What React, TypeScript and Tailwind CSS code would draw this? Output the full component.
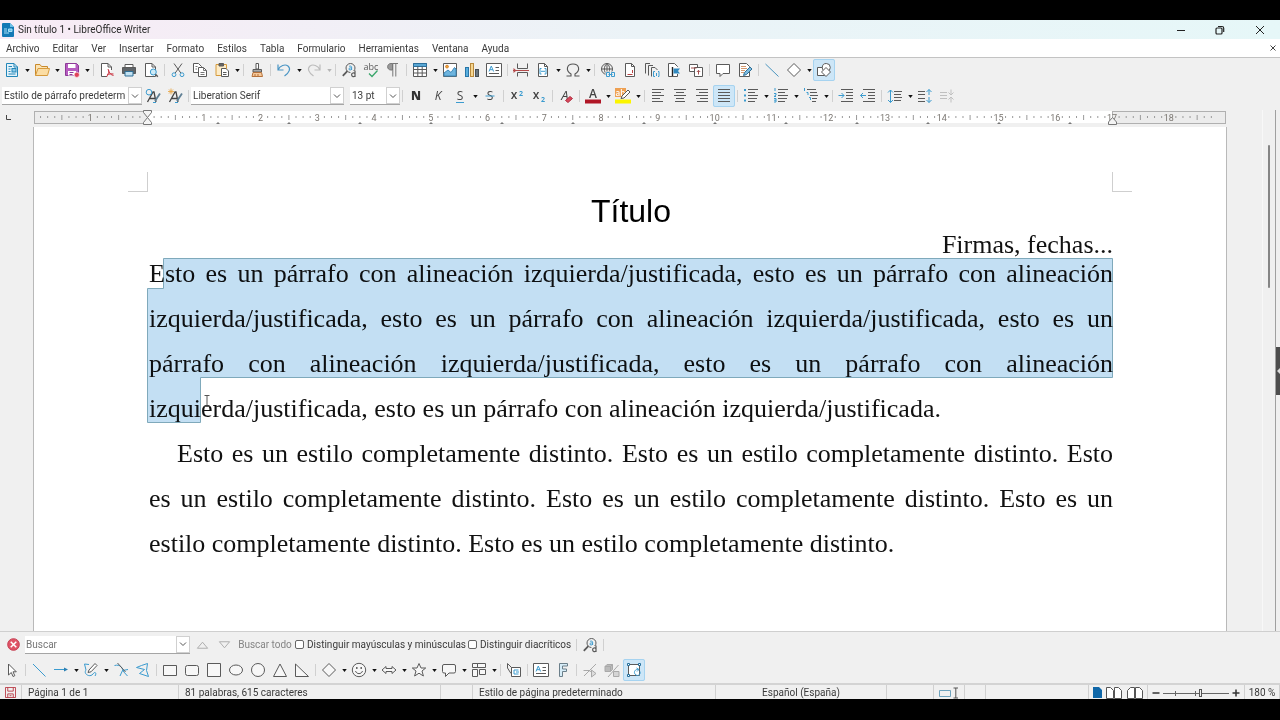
import React, { useState } from 'react';

interface Tool {
  label: string;
  icon: React.ReactNode;
  menu?: boolean;
  active?: boolean;
}

const G = '#5a5a5a';
const B = '#3b9bcf';
const L = '#a9a9a9';

const Icon = ({ children }: { children: React.ReactNode }) => (
  <svg viewBox="0 0 16 16" className="w-4 h-4 shrink-0 overflow-visible" fill="none" stroke={G} strokeWidth="1" aria-hidden="true">
    {children}
  </svg>
);

const lines = (rows: number[][], stroke = G) =>
  rows.map(([x1, x2, y], i) => <path key={i} d={`M${x1} ${y}H${x2}`} stroke={stroke} />);

const pageShape = 'M3.5 1.5H9.5L12.5 4.5V14.5H3.5Z';

const searchGlyph = (
  <>
    <circle cx="9.5" cy="6" r="4.5" />
    <path d="M6.3 9.2L1.8 13.8" strokeWidth="1.8" />
    <path d="M8 4.6C8.5 3.8 10.6 3.8 10.6 5.2V8M10.6 6C9.5 5.7 7.9 5.9 7.9 7C7.9 8.2 9.9 8.3 10.6 7.2" stroke={B} />
    <rect x="9.5" y="9" width="6" height="7" fill="#f0f0f0" stroke="none" />
    <path d="M14 8.5V15M14 11.6C13 10.3 10.6 10.8 10.6 12.8C10.6 14.8 13 15.2 14 13.9" strokeWidth="1.2" />
  </>
);

const standardTools: (Tool | null)[] = [
  {
    label: 'Nuevo', menu: true, icon: <>
      <path d="M2.5 1.5H10L13.5 5V14.5H2.5Z" fill="#e4f3fb" stroke="#2387b8" />
      <path d="M10 1.5V5H13.5M4.5 4.5H8M4.5 7H6.5M4.5 9.5H6.5M4.5 12H11.5" stroke="#2387b8" />
      <rect x="8" y="6.5" width="4" height="3.5" fill="#8fcbe8" stroke="#2387b8" />
    </>
  },
  {
    label: 'Abrir', menu: true, icon: <>
      <path d="M1.5 13.5V2.5H6L7.5 4.5H13.5V6" fill="#fbe3b3" stroke="#c98a2b" />
      <path d="M1.5 13.5L4 6.5H15.5L13.5 13.5Z" fill="#fbdda4" stroke="#d69a3b" />
    </>
  },
  {
    label: 'Guardar', menu: true, icon: <>
      <path d="M1.5 1.5H12.5L14.5 3.5V13.5H1.5Z" fill="#b65cc0" stroke="#8c3a97" />
      <path d="M4 2H11.5V6H4Z" fill="#fff" stroke="none" />
      <path d="M4 9H12V13.5H4Z" fill="#fff" stroke="none" />
      <path d="M5.5 10.5H9.5M5.5 12.5H8.5" stroke="#8c3a97" />
      <circle cx="12.8" cy="12.8" r="2.6" fill="#e0435a" stroke="#fff" strokeWidth=".6" />
    </>
  },
  null,
  {
    label: 'Exportar a PDF', icon: <>
      <path d="M8 14.5H2.5V1.5H9L12.5 5V8" fill="#fff" />
      <path d="M9 1.5V5H12.5" />
      <path d="M9 7C11 10 8 14 7.5 15M9.5 8C10 11 12 13 14.5 13.5M8 13C10 11.5 13 11.8 14.5 12" stroke="#c9303e" />
    </>
  },
  {
    label: 'Imprimir', icon: <>
      <path d="M4 5.5V2.5H12V5.5" fill="#fff" />
      <path d="M1.5 5.5H14.5V11.5H1.5Z" fill="#5f6468" />
      <path d="M4 9.5H12V14H4Z" fill="#c2e2f3" stroke="#2f6f96" />
    </>
  },
  {
    label: 'Previsualizar impresión', icon: <>
      <path d="M7 14.5H2.5V1.5H9L12.5 5V14.5Z" fill="#fff" />
      <path d="M9 1.5V5H12.5" />
      <circle cx="10.3" cy="10" r="3" fill="#cdeaf7" stroke={B} />
      <path d="M12.5 12.3L14.8 14.8" stroke={G} strokeWidth="1.4" />
    </>
  },
  null,
  {
    label: 'Cortar', icon: <>
      <path d="M4 1.5L10.8 11M12 1.5L5.2 11" />
      <circle cx="4" cy="12.7" r="1.9" stroke={B} />
      <circle cx="12" cy="12.7" r="1.9" stroke={B} />
    </>
  },
  {
    label: 'Copiar', icon: <>
      <path d="M1.5 1.5H6.5L9.5 4.5V10.5H1.5Z" fill="#fff" />
      <path d="M6.5 5.5H11.5L14.5 8.5V14.5H6.5Z" fill="#fff" />
      <path d="M11.5 5.5V8.5H14.5M8.5 10.5H12.5M8.5 12.5H12.5M3.5 4.5H5.5M3.5 7H5" stroke="#777" />
    </>
  },
  {
    label: 'Pegar', menu: true, icon: <>
      <path d="M2 2.5H12.5V13.5H2Z" fill="#fdecc8" stroke="#d69a3b" />
      <path d="M5 1.5H9.5V4H5Z" fill="#666" />
      <path d="M7.5 6.5H12L14.5 9V14.5H7.5Z" fill="#fff" />
      <path d="M9 10.5H12.5M9 12.5H12.5" />
    </>
  },
  null,
  {
    label: 'Clonar formato', icon: <>
      <path d="M7 1.5H9.5V7H7Z" fill="#fff" />
      <path d="M4 7.5H12.5V10H4Z" fill="#aaa" />
      <path d="M4 10.5H12.5L13.5 14.5H3Z" fill="#f7c99a" stroke="#b5713a" />
      <path d="M6 12V14M9 12V14" stroke="#b5713a" />
    </>
  },
  null,
  { label: 'Deshacer', menu: true, icon: <path d="M2 2.5V8H7.5M2 8C4 3.5 9 1.8 12 4C15 6.5 13.5 10.5 8.5 14" stroke="#4a95c4" strokeWidth="1.2" /> },
  { label: 'Rehacer', menu: true, icon: <path d="M14 2.5V8H8.5M14 8C12 3.5 7 1.8 4 4C1 6.5 2.5 10.5 7.5 14" stroke="#bcbcbc" strokeWidth="1.2" /> },
  null,
  { label: 'Buscar y reemplazar', icon: searchGlyph },
  {
    label: 'Ortografía', icon: <>
      <text x="8" y="8" textAnchor="middle" fontSize="9" fontFamily="Open Sans, sans-serif" fill={G} stroke="none">abc</text>
      <path d="M6 11.5L9 14.5L14.5 8.5" stroke="#3aa66b" strokeWidth="1.3" />
    </>
  },
  {
    label: 'Marcas de formato', icon: <>
      <path d="M7.5 1.5H6C1.5 1.5 1.5 8 6 8H7.5Z" fill="#999" stroke="#777" />
      <path d="M7.5 1.5H13M7.8 1.5V14.5M10.8 1.5V14.5" stroke="#777" />
    </>
  },
  null,
  {
    label: 'Insertar tabla', menu: true, icon: <>
      <path d="M1.5 1.5H14.5V14.5H1.5Z" fill="#fff" />
      <path d="M1.5 1.5H14.5V4.5H1.5Z" fill="#58a6d3" stroke="#2b6f9c" />
      <path d="M1.5 7.5H14.5M1.5 11H14.5M5.8 4.5V14.5M10.2 4.5V14.5" />
    </>
  },
  {
    label: 'Insertar imagen', icon: <>
      <path d="M1.5 1.5H14.5V14.5H1.5Z" fill="#fff" />
      <path d="M2 14V11L6 8L9 10.5L12.5 5.5L14 7V14Z" fill="#6db4de" stroke="#3b88ba" />
      <circle cx="5" cy="4.6" r="1.4" fill="#f1a33c" stroke="#d5852a" />
    </>
  },
  {
    label: 'Insertar gráfico', icon: <>
      <rect x="1.5" y="5.5" width="3" height="9" fill="#58aede" stroke="#2876a8" />
      <rect x="6.5" y="1.500" width="3" height="13" fill="#f6d793" stroke="#b98a3c" />
      <rect x="11.5" y="7.5" width="3" height="7" fill="#6b7780" stroke="#474f55" />
    </>
  },
  {
    label: 'Cuadro de texto', icon: <>
      <path d="M.5 1.5H15.5V14.5H.5Z" fill="#fff" />
      <path d="M3 9.5L5.3 4L7.6 9.5M3.8 7.7H6.8" stroke={B} />
      {lines([[9.5, 13, 5.5], [9.5, 13, 8.5], [3, 13, 11.5]])}
    </>
  },
  null,
  {
    label: 'Salto de página', icon: <>
      <path d="M4.5 1.5V6.5H14.5V1.5M4.5 14.5V10.5H14.5V14.5" />
      <path d="M0 8.5H16" stroke="#b44a4a" />
      <path d="M0.5 6L3.5 8.5L0.5 11Z" fill="#b44a4a" stroke="none" />
    </>
  },
  {
    label: 'Insertar campo', menu: true, icon: <>
      <path d={pageShape} fill="#fff" />
      <path d="M9.5 1.5V4.5H12.5" />
      <path d="M6.5 6.5H5V12H6.5M9.5 6.5H11V12H9.5M6 9.3H10" stroke={B} />
    </>
  },
  { label: 'Carácter especial', menu: true, icon: <path d="M1.5 14H6V12C0 8.5 2 2 8 2S16 8.5 10 12V14H14.5" stroke="#555" strokeWidth="1.1" /> },
  null,
  {
    label: 'Hiperenlace', icon: <>
      <circle cx="7" cy="7" r="5.5" />
      <path d="M1.5 7H12.5M7 1.5V12.5M7 1.5C3.5 4 3.5 10 7 12.5M7 1.5C10.5 4 10.5 10 7 12.5" />
      <rect x="5.5" y="9.5" width="10" height="6" fill="#f0f0f0" stroke="none" />
      <path d="M6.5 10.500H9.500V14.500H6.500ZM11.500 10.500H14.500V14.500H11.500ZM8.500 12.500H12.500" stroke={B} />
    </>
  },
  {
    label: 'Nota al pie', icon: <>
      <path d={pageShape} fill="#fff" />
      <path d="M9.5 1.5V4.5H12.5" />
      <path d="M5.5 12.5H10.500M10.500 8V11" stroke="#b94343" />
    </>
  },
  {
    label: 'Nota final', icon: <>
      <path d="M1.5 11.5V1.5H6M4.5 13.5V3.5H9M7.5 14.5V5.5H11L13.5 8" />
      <path d="M11 9.5H9.5V14.5H11M14 9.5H15V14.5H14M12.5 11V14" stroke={B} />
    </>
  },
  {
    label: 'Marcador', icon: <>
      <path d="M11.5 5V4.5L8.5 1.5H2.5V14.5H11.5V12" fill="#fff" />
      <path d="M6.5 5V14" stroke="#222" strokeWidth="1.4" />
      <path d="M7.5 6.5H14L12 9L14 11.5H7.5Z" fill="#3189bf" stroke="none" />
    </>
  },
  {
    label: 'Referencia cruzada', icon: <>
      <path d="M1.5 2.5H9.5V9.5H1.5Z" fill="#fff" />
      <path d="M6.5 5.5H14.5V14.5H6.5Z" fill="#fff" />
      <path d="M3 6H8.5M10.5 12.5V8.5M8.8 10L10.5 8.3L12.2 10" stroke="#a04c4c" />
    </>
  },
  null,
  { label: 'Comentario', icon: <path d="M1.5 2.5H14.5V11.5H8L5 14.5V11.5H1.5Z" fill="#fff" /> },
  {
    label: 'Control de cambios', icon: <>
      <path d="M2.5 1.5H9.5L12.5 4.5V14.5H2.5Z" fill="#fff" />
      {lines([[4, 9, 4.5], [4, 10, 6.5], [4, 8, 8.5], [4, 7, 10.5]], '#d49a70')}
      <path d="M6.5 13.5L7.5 10.5L13 5L15 7L9.5 12.5Z" fill="#7dbbe0" stroke="#2f6f96" />
    </>
  },
  null,
  { label: 'Línea', icon: <path d="M1.5 2L14.5 14.5" stroke="#4a95bf" /> },
  { label: 'Formas', menu: true, icon: <path d="M8 1.5L14.5 8L8 14.5L1.5 8Z" fill="#fff" /> },
  {
    label: 'Mostrar funciones de dibujo', active: true, icon: <>
      <path d="M1.5 5.5H8.5V13.5H1.5Z" fill="#fff" />
      <circle cx="10.3" cy="5.5" r="4" fill="#fff" />
      <path d="M10 5.5L14.5 10L10 14.5L5.5 10Z" fill="#fff" />
    </>
  },
];

const styleTools: Tool[] = [
  {
    label: 'Actualizar estilo', icon: <>
      <path d="M2.5 14L8 4H9L11 14M4.5 10.5H10" stroke="#444" strokeWidth="1.3" />
      <circle cx="4" cy="4.2" r="2.8" stroke={B} />
      <path d="M10 13L15 5.500" stroke="#5f7f94" strokeWidth="1.8" />
      <path d="M8 14.500H11" stroke={B} />
    </>
  },
  {
    label: 'Estilo nuevo', icon: <>
      <path d="M2.5 14L8 4H9L11 14M4.5 10.5H10" stroke="#444" strokeWidth="1.3" />
      <path d="M4 .5V6.5M1 3.5H7M2 1.5L6 5.5M6 1.5L2 5.5" stroke="#e8a84a" strokeWidth=".9" />
      <path d="M10 13L15 5.500" stroke="#5f7f94" strokeWidth="1.8" />
      <path d="M8 14.500H11" stroke={B} />
    </>
  },
];

const glyph = (t: string, extra: React.SVGProps<SVGTextElement> = {}) => (
  <text x="8" y="12" textAnchor="middle" fontSize="12" fontFamily="Open Sans, sans-serif" fill="#444" stroke="none" {...extra}>{t}</text>
);

const formatTools: (Tool | null)[] = [
  null,
  { label: 'Negrita', icon: glyph('N', { fontWeight: 800, fill: '#333' }) },
  { label: 'Cursiva', icon: glyph('K', { fontStyle: 'italic' }) },
  { label: 'Subrayado', menu: true, icon: <>{glyph('S')}<path d="M4 14.5H12" stroke={B} /></> },
  { label: 'Tachado', icon: <>{glyph('S')}<path d="M3.5 8H12.5" stroke={B} /></> },
  null,
  { label: 'Superíndice', icon: <>{glyph('x', { x: 5, y: 11, fontWeight: 600 })}{glyph('2', { x: 12, y: 8, fontSize: 7, fontWeight: 700, fill: B })}</> },
  { label: 'Subíndice', icon: <>{glyph('x', { x: 5, y: 11, fontWeight: 600 })}{glyph('2', { x: 12, y: 14, fontSize: 7, fontWeight: 700, fill: B })}</> },
  null,
  {
    label: 'Limpiar formato', icon: <>
      {glyph('A', { x: 7, y: 12, fontStyle: 'italic', fontSize: 13 })}
      <path d="M7.5 12.5L12 8.5L14.5 10.5L10 14.5Z" fill="#d8455a" stroke="#b02f42" />
    </>
  },
  null,
  { label: 'Color de letra', menu: true, icon: <>{glyph('A', { y: 10, fontWeight: 600 })}<path d="M0 13.5H16" stroke="#b01626" strokeWidth="4" /></> },
  {
    label: 'Resaltado', menu: true, icon: <>
      <rect x="0" y="0" width="11" height="9" fill="#eea052" stroke="none" />
      <text x="0.5" y="8" fontSize="8" fontFamily="Open Sans, sans-serif" fontWeight="600" fill="#fff" stroke="none">ab</text>
      <path d="M6 10.5L7 8L13 2L15 4L9 10Z" fill="#fff" stroke="#555" />
      <path d="M0 13.5H16" stroke="#fbf500" strokeWidth="4" />
    </>
  },
  null,
  { label: 'Alinear a la izquierda', icon: lines([[2, 14, 1.5], [2, 11, 4.5], [2, 14, 7.5], [2, 10, 10.5], [2, 13, 13.5]]) },
  { label: 'Centrar', icon: lines([[2, 14, 1.5], [4, 12, 4.5], [2, 14, 7.5], [4, 12, 10.5], [3, 13, 13.5]]) },
  { label: 'Alinear a la derecha', icon: lines([[2, 14, 1.5], [5, 14, 4.5], [2, 14, 7.5], [6, 14, 10.5], [3, 14, 13.5]]) },
  { label: 'Justificar', active: true, icon: lines([[2, 14, 1.5], [2, 14, 4.5], [2, 14, 7.5], [2, 14, 10.5], [2, 14, 13.5]]) },
  null,
  {
    label: 'Viñetas', menu: true, icon: <>
      {lines([[5, 15, 1.5], [5, 12, 4.5], [5, 15, 7.5], [5, 14, 10.5], [5, 12, 13.5]])}
      <path d="M1 2H3M1 7.5H3M1 12.5H3" stroke={B} strokeWidth="2" />
    </>
  },
  {
    label: 'Numeración', menu: true, icon: <>
      {lines([[5, 15, 1.5], [5, 12, 4.5], [5, 15, 7.5], [5, 14, 10.5], [5, 12, 13.5]])}
      <path d="M2 0V3M1 5.5H3V7L1 8.5H3M1 10.5H3V14H1M1 12.2H3" stroke={B} />
    </>
  },
  {
    label: 'Esquema', menu: true, icon: <>
      {lines([[4, 13, 1.5], [7, 14, 4.5], [7, 15, 7.5], [9, 14, 10.5], [9, 13, 13.5]])}
      <path d="M1.5 0V3M3.5 4.5H5V7M6 9.5H7.5V12" stroke={B} />
    </>
  },
  null,
  {
    label: 'Aumentar sangría', icon: <>
      {lines([[3, 15, 1.5], [8, 15, 4.5], [8, 15, 7.5], [8, 15, 10.5], [3, 15, 13.5]])}
      <path d="M0.5 7.5H6M3.5 5L6 7.5L3.5 10" stroke={B} />
    </>
  },
  {
    label: 'Reducir sangría', icon: <>
      {lines([[3, 15, 1.5], [8, 15, 4.5], [8, 15, 7.5], [8, 15, 10.5], [3, 15, 13.5]])}
      <path d="M0.5 7.5H6M3 5L.5 7.5L3 10" stroke={B} />
    </>
  },
  null,
  {
    label: 'Interlineado', menu: true, icon: <>
      {lines([[7, 15, 3.5], [7, 14, 6.5], [7, 15, 9.5], [7, 14, 12.5]])}
      <path d="M3.5 2V14.5M1 4.5L3.5 2L6 4.5M1 12L3.5 14.5L6 12" stroke={B} />
    </>
  },
  {
    label: 'Aumentar espaciado', icon: <>
      {lines([[1, 8, 3.5], [1, 8, 6.5], [1, 8, 10.5], [1, 8, 13.5]])}
      <path d="M12 7V1.5M9.5 4L12 1.5L14.5 4M12 9V14.5M9.5 12L12 14.5L14.5 12" stroke={B} />
    </>
  },
  {
    label: 'Reducir espaciado', icon: <>
      {lines([[1, 8, 4.5], [1, 8, 7.5], [1, 8, 10.5]], '#c0c0c0')}
      <path d="M12 1.5V7M9.5 4.5L12 7L14.5 4.5M12 14.5V9M9.5 11.5L12 9L14.5 11.5" stroke="#c0c0c0" />
    </>
  },
];

const drawTools: (Tool | null)[] = [
  { label: 'Seleccionar', icon: <path d="M4.5 2V13L7.3 10.5L9 14.5L10.8 13.7L9 9.8H12.3Z" fill="#fff" /> },
  null,
  { label: 'Insertar línea', icon: <path d="M2 2L14.5 14.5" stroke={B} /> },
  { label: 'Líneas y flechas', menu: true, icon: <><path d="M1 7.5H12" stroke={B} /><path d="M11 5.5L15 7.5L11 9.5Z" fill="#2a7fb3" stroke="none" /></> },
  {
    label: 'Curvas y polígonos', menu: true, icon: <>
      <path d="M6 2.5L1.5 2L3 8C0 12 7 16 10 12C12 9 14 11 12 14" stroke={B} />
      <path d="M5 10.5L6 8L12 1.5L14 3.5L8 9.8Z" fill="#fff" />
    </>
  },
  {
    label: 'Conectores', icon: <>
      <path d="M1.5 3.5C7 2 10 6 9.5 8.5L14.5 14M9.5 8.5L15 7.5M9.5 8.5L7 14" stroke={B} />
      <path d="M4.5 1L12.5 10" />
    </>
  },
  { label: 'Polígono', icon: <path d="M1.5 5.5L6.5 3.5L12.500 1.500L11.5 8.5L13.5 14.500L4.5 11.5L9.500 7.500Z" stroke={B} /> },
  null,
  { label: 'Rectángulo', icon: <path d="M1.5 3.5H14.5V13.5H1.5Z" fill="#f7f7f7" /> },
  { label: 'Rectángulo redondeado', icon: <rect x="1.5" y="3.5" width="13" height="10" rx="2" fill="#f7f7f7" /> },
  { label: 'Cuadrado', icon: <path d="M1.5 1.5H14.5V14.5H1.5Z" fill="#f7f7f7" /> },
  { label: 'Elipse', icon: <ellipse cx="8" cy="8" rx="6.5" ry="5" fill="#f7f7f7" /> },
  { label: 'Círculo', icon: <circle cx="8" cy="8" r="6.5" fill="#f7f7f7" /> },
  { label: 'Triángulo', icon: <path d="M8 2L14.5 14.500H1.5Z" fill="#f7f7f7" /> },
  { label: 'Triángulo rectángulo', icon: <path d="M1.5 2L14.5 14.500H1.5Z" fill="#f7f7f7" /> },
  null,
  { label: 'Formas básicas', menu: true, icon: <path d="M8 1.5L14.5 8L8 14.5L1.5 8Z" fill="#f7f7f7" /> },
  {
    label: 'Símbolos', menu: true, icon: <>
      <circle cx="8" cy="8" r="6.7" fill="#f7f7f7" />
      <path d="M4.5 9C5.5 12.5 10.5 12.5 11.5 9" />
      <path d="M5.8 5V7M10.2 5V7" strokeWidth="1.4" />
    </>
  },
  { label: 'Flechas de bloque', menu: true, icon: <path d="M1 8L5 4.5V6.5H11V4.5L15 8L11 11.5V9.5H5V11.5Z" fill="#f7f7f7" /> },
  { label: 'Estrellas', menu: true, icon: <path d="M8 1.5L10 6H14.7L11 9L12.4 14L8 11.2L3.6 14L5 9L1.3 6H6Z" fill="#f7f7f7" /> },
  { label: 'Llamadas', menu: true, icon: <path d="M3 2.5H13Q14.5 2.5 14.5 4V9.5Q14.5 11 13 11H8L4.5 14.5V11H3Q1.5 11 1.5 9.5V4Q1.5 2.5 3 2.5Z" fill="#f7f7f7" /> },
  { label: 'Diagrama de flujo', menu: true, icon: <path d="M1.5 1.500H6.5V5.5H1.5ZM6.500 1.500H14.5V5.5H6.500ZM1.5 7.500H6.500V14.500H1.5ZM8.500 7.500H14.5V12.500H8.500Z" fill="#f7f7f7" /> },
  null,
  {
    label: 'Llamada con línea', icon: <>
      <path d="M1.5 1.5L6.5 6.5M1.5 1.5V6L5 11.5" />
      <path d="M5.5 5.5H14.5V14.5H5.5Z" fill="#fff" />
      <path d="M12.5 8H8V12H12.5M10 10H13" stroke={B} />
    </>
  },
  null,
  {
    label: 'Insertar cuadro de texto', icon: <>
      <path d="M.5 1.5H15.5V14.5H.5Z" fill="#fff" />
      <path d="M3 9.5L5.3 4L7.6 9.5M3.8 7.7H6.8" stroke={B} />
      {lines([[9.5, 13, 5.5], [9.5, 13, 8.5], [3, 13, 11.5]])}
    </>
  },
  { label: 'Fontwork', icon: <path d="M4.5 14.5V1.5H12.5V4H7.5V7H11.5V9.5H7.5V14.5Z" fill="#d7edf8" stroke="#6b7f8a" /> },
  null,
  {
    label: 'Puntos', icon: <g stroke={L}>
      <path d="M2 14L14 2M1.5 8.5H7L13 12" />
      <path d="M9.5 8V15L14 11.5Z" fill="#ddd" />
    </g>
  },
  {
    label: 'Extrusión', icon: <g stroke={L}>
      <path d="M1 4.5L3 2.5H8.5V7.5L6.5 9.5H1Z" fill="#bbb" />
      <path d="M1 4.5H6.5V9.5M6.5 4.5L8.5 2.5" />
      <path d="M4 15L14.5 3" />
      <path d="M9.5 9.5H15V14.5H9.5Z" fill="#d5d5d5" />
    </g>
  },
  {
    label: 'Alternar rotación', active: true, icon: <>
      <path d="M2.5 2.5H13.5V13.5H2.5Z" fill="#fff" />
      <path d="M1.5 1.5H3.5V3.5H1.5ZM12.5 1.5H14.5V3.5H12.5ZM1.5 12.5H3.5V14.5H1.5Z" fill="#fff" stroke="#256f9c" />
      <path d="M12.5 7.5C9 7 7.500 10 9 12C11 15 15 13 14 9.500M10.500 6L13 7.5L11 9.5" stroke={B} />
    </>
  },
];

const ToolButton = ({ tool }: { tool: Tool }) => (
  <>
    <button
      aria-label={tool.label}
      className={`w-[22px] h-[22px] shrink-0 flex items-center justify-center rounded-xs ${tool.active ? 'bg-[#cde6f7] outline outline-[#a6d3f0] -outline-offset-1' : 'hover:bg-[#dcecf8]'}`}
    >
      <Icon>{tool.icon}</Icon>
    </button>
    {tool.menu && (
      <button aria-label={`${tool.label}: más opciones`} className="w-2 h-[22px] shrink-0 flex items-center justify-center">
        <svg viewBox="0 0 6 4" className="w-[5px] h-[3px]"><path d="M0 0H6L3 4Z" fill={tool.label === 'Rehacer' ? '#b5b5b5' : '#111'} /></svg>
      </button>
    )}
  </>
);

const Sep = () => (
  <div className="w-[5px] shrink-0 flex justify-center">
    <div className="w-px h-3 bg-[#d0d0d0]"></div>
  </div>
);

const Tools = ({ items }: { items: (Tool | null)[] }) => (
  <>{items.map((t, i) => (t ? <ToolButton key={i} tool={t} /> : <Sep key={i} />))}</>
);

const Chevron = () => (
  <svg viewBox="0 0 8 8" className="w-2 h-2" fill="none" stroke="#555"><path d="M1 2.5L4 5.5L7 2.5" /></svg>
);

const Combo = ({ label, value, width }: { label: string; value: string; width: string }) => (
  <div className={`relative h-[18px] shrink-0 bg-white border-b border-[#a5a5a5] ${width}`}>
    <select aria-label={label} className="appearance-none w-full h-full pl-[2px] bg-transparent text-[10px] text-[#3c3c3c] outline-none">
      <option>{value}</option>
    </select>
    <span className="absolute right-0 inset-y-0 w-[14px] border border-[#d0d0d0] bg-white flex items-center justify-center pointer-events-none">
      <Chevron />
    </span>
  </div>
);

const Ruler = () => {
  const ticks: React.ReactNode[] = [];
  // one mark each 1/8 cm, longer at the half
  for (let i = -15; i <= 150; i++) {
    const x = 114 + (i * 965) / 136;
    if (x < 4 || x > 1188 || i % 8 === 0) continue;
    const half = i % 4 === 0;
    ticks.push(<path key={i} d={`M${x} ${half ? 5 : 6}V${half ? 10 : 8}`} stroke="#9a9a9a" />);
  }
  const numbers = [-1, ...Array.from({ length: 18 }, (_, i) => i + 1)];
  const tabs = Array.from({ length: 13 }, (_, i) => 114 + (i + 1) * 71);
  return (
    <svg width="1193" height="16" className="block" aria-label="Regla">
      <rect x="1" y="1" width="1191" height="12" fill="#fff" />
      <rect x="1.5" y="1.5" width="113" height="12" fill="#ececec" stroke="#b0b0b0" />
      <rect x="1079.5" y="1.5" width="113" height="12" fill="#ececec" stroke="#b0b0b0" />
      {ticks}
      {numbers.map(n => (
        <text key={n} x={114 + (n * 965) / 17} y="11" textAnchor="middle" fontSize="9" fontFamily="Roboto, sans-serif" fill="#7b7772">{Math.abs(n)}</text>
      ))}
      {tabs.map(x => <path key={x} d={`M${x - 2} 14L${x} 12L${x + 2} 14Z`} fill="#777" />)}
      <path d="M110.5 .5H118.5V2.5L114.5 7.5L118.5 12.5V14.5H110.5V12.5L114.5 7.5L110.5 2.5Z" fill="#f4f4f4" stroke="#777" />
      <path d="M1075.5 14.5V12L1079.5 7.5L1083.5 12V14.5Z" fill="#f4f4f4" stroke="#777" />
    </svg>
  );
};

const menus = ['Archivo', 'Editar', 'Ver', 'Insertar', 'Formato', 'Estilos', 'Tabla', 'Formulario', 'Herramientas', 'Ventana', 'Ayuda'];

const App: React.FC = () => {
  const [search, setSearch] = useState('');
  const [zoom, setZoom] = useState(57);
  const [matchCase, setMatchCase] = useState(false);
  const [diacritics, setDiacritics] = useState(false);

  return (
    <div className="min-h-screen bg-black pt-5 pb-[21px] flex flex-col font-[Roboto,sans-serif] text-[10px] text-[#3a3a3a] overflow-hidden">
      <div className="flex-1 flex flex-col bg-[#f0f0f0]">
        {/* Title bar */}
        <header className="h-[19px] flex items-center justify-between bg-linear-to-r from-[#f8ebf5] via-[#ebf3f7] to-[#e6f7f8] pl-[2px]">
          <div className="flex items-center gap-1">
            <svg viewBox="0 0 12 14" className="w-3 h-[14px]">
              <path d="M0 1Q0 0 1 0H8L12 4V13Q12 14 11 14H1Q0 14 0 13Z" fill="#1479b5" />
              <path d="M8 0L12 4H8Z" fill="#6cc1e8" />
              <path d="M2 6H5M2 8H5M2 10H7M6.5 6H10V8.5H6.5Z" stroke="#a9e0f7" fill="#5cc0ea" />
            </svg>
            <h1 className="text-[#2a2a2a]">Sin título 1 • LibreOffice Writer</h1>
          </div>
          <div className="flex text-[#222]">
            <button aria-label="Minimizar" className="w-[39px] flex justify-center">
              <svg viewBox="0 0 10 10" className="w-[10px] h-[10px]" stroke="currentColor"><path d="M1 5.5H9" /></svg>
            </button>
            <button aria-label="Restaurar" className="w-[39px] flex justify-center">
              <svg viewBox="0 0 10 10" className="w-[10px] h-[10px]" fill="none" stroke="currentColor">
                <rect x="1" y="3" width="6" height="6" rx="1" strokeWidth="1.2" />
                <path d="M3 1.5H7Q8.7 1.5 8.7 3.2V7" strokeWidth="1.2" />
              </svg>
            </button>
            <button aria-label="Cerrar" className="w-[41px] flex justify-center">
              <svg viewBox="0 0 10 10" className="w-[10px] h-[10px]" stroke="currentColor"><path d="M1 1L9 9M9 1L1 9" /></svg>
            </button>
          </div>
        </header>

        {/* Menu bar */}
        <nav className="h-[19px] flex items-center justify-between bg-white border-b border-[#c3c3c3] pl-[6px] pr-[3px]">
          <div className="flex gap-[13px]">
            {menus.map(m => <button key={m}>{m}</button>)}
          </div>
          <button aria-label="Cerrar documento">
            <svg viewBox="0 0 8 8" className="w-2 h-2" stroke="#444"><path d="M1.5 1.5L6.5 6.5M6.5 1.5L1.5 6.5" /></svg>
          </button>
        </nav>

        {/* Toolbars */}
        <div className="h-6 flex items-center pl-px">
          <Tools items={standardTools} />
        </div>
        <div className="h-7 flex items-center pl-[2px]">
          <Combo label="Estilo de párrafo" value="Estilo de párrafo predeterm" width="w-[140px]" />
          <Tools items={styleTools} />
          <Sep />
          <Combo label="Nombre del tipo de letra" value="Liberation Serif" width="w-[153px]" />
          <div className="w-[6px]"></div>
          <Combo label="Tamaño de letra" value="13 pt" width="w-[50px]" />
          <Tools items={formatTools} />
        </div>

        {/* Editing area */}
        <div className="flex-1 flex">
          <div className="w-[33px] shrink-0 flex justify-start pl-[6px] pt-[5px]">
            <svg viewBox="0 0 5 5" className="w-[5px] h-[5px]"><path d="M.5 0V4.5H5" fill="none" stroke="#444" /></svg>
          </div>
          <div className="flex-1 min-w-0 flex flex-col">
            <div className="h-[17px] overflow-hidden"><Ruler /></div>
            <main className="flex-1 relative bg-white border-x border-[#b9b9b9] pl-[115px] pr-[113px] pt-[66px]">
              <div className="absolute left-[94px] top-[45px] w-5 h-5 border-r border-b border-[#cfcfcf]"></div>
              <div className="absolute right-[94px] top-[45px] w-5 h-5 border-l border-b border-[#cfcfcf]"></div>
              <h2 className="font-['Liberation_Sans',sans-serif] text-[32px] leading-[37px] text-black text-center">Título</h2>
              <div className="font-['Liberation_Serif',serif] text-[26px] leading-[45px] text-[#111]">
                <p className="leading-[30px] text-right">Firmas, fechas...</p>
                <div className="relative -mt-[9px]">
                  <p className="text-justify">
                    Esto es un párrafo con alineación izquierda/justificada, esto es un párrafo con alineación izquierda/justificada, esto es un párrafo con alineación izquierda/justificada, esto es un párrafo con alineación izquierda/justificada, esto es un párrafo con alineación izquierda/justificada, esto es un párrafo con alineación izquierda/justificada.
                  </p>
                  <svg className="absolute -left-[2px] top-[7px] mix-blend-multiply" width="967" height="166" aria-hidden="true">
                    <path d="M16.5 .5H965.5V119.5H53.5V164.5H.5V30.5H16.5Z" fill="#c3dff3" stroke="#7fa9bb" />
                  </svg>
                  <svg className="absolute left-[55px] top-[144px]" width="6" height="12" fill="none" stroke="#555" aria-hidden="true">
                    <path d="M.5 .5H5.5M3 .5V11.5M.5 11.5H5.5" />
                  </svg>
                </div>
                <p className="text-justify indent-7">
                  Esto es un estilo completamente distinto. Esto es un estilo completamente distinto. Esto es un estilo completamente distinto. Esto es un estilo completamente distinto. Esto es un estilo completamente distinto. Esto es un estilo completamente distinto.
                </p>
              </div>
            </main>
          </div>
          {/* Scrollbar and sidebar handle */}
          <div className="w-[53px] shrink-0 flex justify-end">
            <div className="w-[13px] flex justify-center pt-[35px] border-l border-[#f8f8f8]">
              <div className="w-[2px] h-[143px] rounded bg-[#858585]"></div>
            </div>
            <div className="w-[5px] border-l border-[#a0a0a0] flex items-center">
              <button aria-label="Mostrar barra lateral" className="w-full h-[48px] bg-[#4d4d4d] flex items-center justify-center">
                <svg viewBox="0 0 3 6" className="w-[3px] h-[6px]"><path d="M3 0V6L0 3Z" fill="#ddd" /></svg>
              </button>
            </div>
          </div>
        </div>

        {/* Find bar */}
        <div className="h-[26px] flex items-center border-t border-[#cfcfcf] pl-[7px]">
          <button aria-label="Cerrar barra de búsqueda">
            <svg viewBox="0 0 14 14" className="w-[13px] h-[13px]">
              <circle cx="7" cy="7" r="6.3" fill="#df5366" stroke="#c43c50" />
              <path d="M4 4L10 10M10 4L4 10" stroke="#fff" strokeWidth="1.6" />
            </svg>
          </button>
          <div className="ml-[5px] flex h-[18px] bg-white border-b border-[#a5a5a5]">
            <input
              aria-label="Buscar"
              placeholder="Buscar"
              value={search}
              onChange={e => setSearch(e.target.value)}
              className="w-[151px] pl-px outline-none placeholder:text-[#777]"
            />
            <button aria-label="Historial de búsqueda" className="w-[14px] border border-[#d0d0d0] flex items-center justify-center"><Chevron /></button>
          </div>
          <button aria-label="Buscar anterior" className="w-[24px] flex justify-center">
            <svg viewBox="0 0 14 8" className="w-[13px] h-2" fill="none" stroke="#aaa"><path d="M1.5 7.5L7 1L12.5 7.5Z" /></svg>
          </button>
          <button aria-label="Buscar siguiente" className="w-[21px] flex justify-center">
            <svg viewBox="0 0 14 8" className="w-[13px] h-2" fill="none" stroke="#aaa"><path d="M1.5 .5L7 7L12.5 .5Z" /></svg>
          </button>
          <button className="w-[60px] whitespace-nowrap text-[#858585]">Buscar todo</button>
          <label className="flex items-center gap-[3px] whitespace-nowrap">
            <input type="checkbox" checked={matchCase} onChange={e => setMatchCase(e.target.checked)} className="appearance-none w-[9px] h-[9px] border border-[#666] rounded-xs bg-white checked:bg-[#3b9bcf]" />
            Distinguir mayúsculas y minúsculas
          </label>
          <label className="ml-[2px] flex items-center gap-[3px] whitespace-nowrap">
            <input type="checkbox" checked={diacritics} onChange={e => setDiacritics(e.target.checked)} className="appearance-none w-[9px] h-[9px] border border-[#666] rounded-xs bg-white checked:bg-[#3b9bcf]" />
            Distinguir diacríticos
          </label>
          <div className="w-[3px]"></div>
          <Tools items={[null, { label: 'Buscar y reemplazar', icon: searchGlyph }, null]} />
        </div>

        {/* Drawing bar */}
        <div className="h-[26px] flex items-center pl-px">
          <Tools items={drawTools} />
        </div>

        {/* Status bar */}
        <footer className="h-4 flex items-stretch border-t-2 border-[#d3d3d3] whitespace-nowrap *:flex *:items-center *:pt-px *:border-r *:border-[#d0d0d0]">
          <div className="w-[22px] justify-center">
            <svg viewBox="0 0 12 12" className="w-[11px] h-[11px]" fill="none" stroke="#b93a45"><path d="M.5 .5H11.5V11.5H.5ZM3 .5V4.5H9V.5M3 11.5V7.5H9V11.5M5 9.5H7" /></svg>
          </div>
          <div className="w-[157px] pl-[6px]">Página 1 de 1</div>
          <div className="w-[262px] pl-[6px]">81 palabras, 615 caracteres</div>
          <div className="w-[32px]"></div>
          <div className="w-[243px] pl-[6px]">Estilo de página predeterminado</div>
          <div className="w-[171px] justify-center">Español (España)</div>
          <div className="w-[47px]"></div>
          <div className="w-[31px] justify-center">
            <svg viewBox="0 0 20 12" className="w-5 h-3" fill="none"><path d="M.5 3.5H11.5V9.5H.5Z" stroke="#6fa3bd" /><path d="M14.5 1H19M14.5 11H19M16.8 1V11" stroke="#555" /></svg>
          </div>
          <div className="w-[21px]"></div>
          <div className="flex-1"></div>
          <div className="w-[59px] justify-center gap-[3px]">
            <button aria-label="Vista de una página">
              <svg viewBox="0 0 9 11" className="w-[9px] h-[11px]"><path d="M0 0H6L9 3V11H0Z" fill="#0f67a8" /></svg>
            </button>
            <button aria-label="Vista de varias páginas">
              <svg viewBox="0 0 18 12" className="w-[18px] h-3" fill="#fff" stroke="#555"><path d="M1.5 .5H5.5L8.5 3.5V11.5H1.5ZM9.5 .5H13.5L16.5 3.5V11.5H9.5Z" /></svg>
            </button>
            <button aria-label="Vista de libro">
              <svg viewBox="0 0 18 12" className="w-[18px] h-3" fill="#fff" stroke="#555"><path d="M8.5 .5H4.5L1.5 3.5V11.5H8.5ZM9.5 .5H13.5L16.5 3.5V11.5H9.5Z" /></svg>
            </button>
          </div>
          <div className="w-[97px] justify-center gap-[3px]">
            <button aria-label="Reducir" className="w-2"><svg viewBox="0 0 8 8" className="w-2 h-2" stroke="#333" strokeWidth="1.5"><path d="M.5 4H7.5" /></svg></button>
            <div className="relative w-[66px] h-3 flex items-center">
              <svg className="absolute inset-0" width="66" height="12" stroke="#666"><path d="M0 6.5H66M12.5 4V9M32.5 4V9" /></svg>
              <input
                type="range"
                aria-label="Escala"
                value={zoom}
                onChange={e => setZoom(Number(e.target.value))}
                className="relative appearance-none w-full h-3 bg-transparent [&::-webkit-slider-thumb]:appearance-none [&::-webkit-slider-thumb]:w-[3px] [&::-webkit-slider-thumb]:h-2 [&::-webkit-slider-thumb]:bg-[#f0f0f0] [&::-webkit-slider-thumb]:border [&::-webkit-slider-thumb]:border-[#555]"
              />
            </div>
            <button aria-label="Ampliar" className="w-2"><svg viewBox="0 0 8 8" className="w-2 h-2" stroke="#333" strokeWidth="1.5"><path d="M.5 4H7.5M4 .5V7.5" /></svg></button>
          </div>
          <div className="w-[35px] justify-center">180 %</div>
        </footer>
      </div>
    </div>
  );
};

export default App;
